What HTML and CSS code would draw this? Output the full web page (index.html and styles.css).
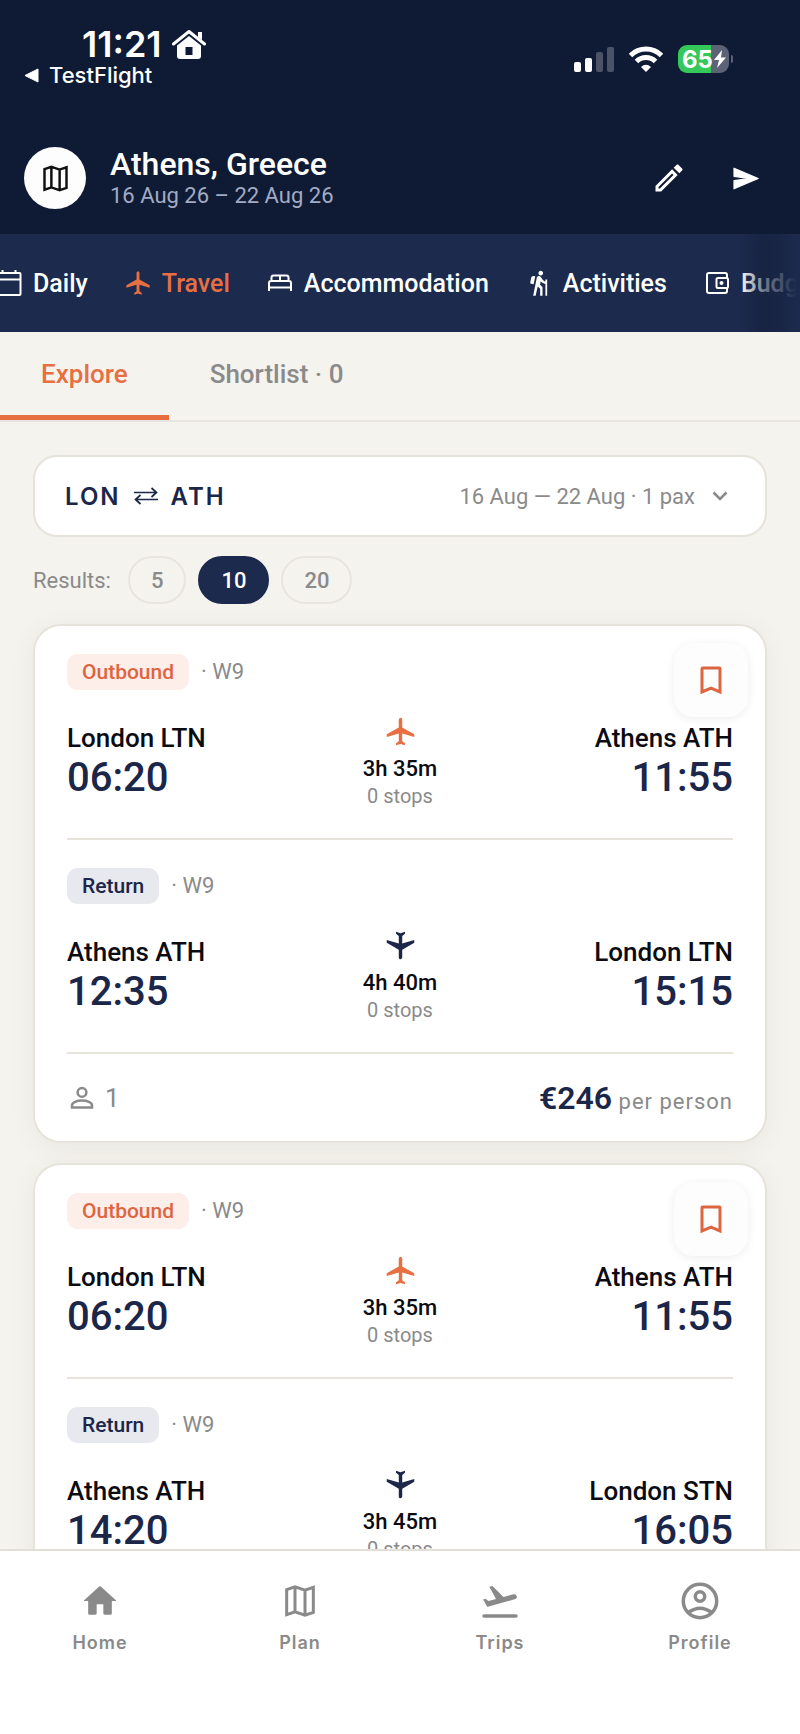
FILE: index.html
```
<!DOCTYPE html>
<html lang="en">
<head>
    <meta charset="UTF-8">
    <meta name="viewport" content="width=device-width, initial-scale=1.0">
    <title>Athens, Greece - Travel</title>
    <link rel="stylesheet" href="styles.css">
</head>
<body>
    <!-- shared icons -->
    <svg class="sprite" aria-hidden="true">
        <symbol id="map" viewBox="0 0 24 24">
            <path d="M4 5.2 9 3.5l6 2 5-1.7v15L15 20.5l-6-2-5 1.7zM9 3.5v15M15 5.5v15" fill="none" stroke="currentColor" stroke-width="1.8"/>
        </symbol>
        <symbol id="plane" viewBox="0 -960 960 960">
            <path d="M350-80v-60l80-60v-220L80-320v-80l350-200v-220q0-21 14.500-35.500T480-880q21 0 35.500 14.500T530-820v220l350 200v80L530-420v220l80 60v60l-130-40-130 40Z" fill="currentColor"/>
        </symbol>
        <symbol id="bookmark" viewBox="0 0 24 24">
            <path d="M6 4.500Q6 4 6.500 4h11Q18 4 18 4.500V20l-6-2.600L6 20z" fill="none" stroke="currentColor" stroke-width="2"/>
        </symbol>
        <symbol id="person" viewBox="0 0 24 24">
            <circle cx="12" cy="7.500" r="3.500"/>
            <path d="M4 19.500v-1.700c0-2.300 4-3.800 8-3.800s8 1.500 8 3.800v1.700z"/>
        </symbol>
    </svg>

    <header>
        <div class="status">
            <div>
                <div class="clock">
                    11:21
                    <svg width="34" height="31" viewBox="0 0 34 31">
                        <path d="M1.500 15 17 2.500 32.500 15" fill="none" stroke="#fff" stroke-width="3" stroke-linecap="round" stroke-linejoin="round"/>
                        <path d="M26 3h4v8l-4-3z" fill="#fff"/>
                        <path fill-rule="evenodd" d="M17 7 29 16.500V27q0 3-3 3H8q-3 0-3-3V16.500zM13.500 18v8h7v-8z" fill="#fff"/>
                    </svg>
                </div>
                <a class="back" href="#">
                    <svg width="15" height="15" viewBox="0 0 15 15"><path d="M1 7.500 14 1v13z" fill="#fff" stroke="#fff" stroke-linejoin="round"/></svg>
                    TestFlight
                </a>
            </div>
            <div class="indicators">
                <svg width="40" height="28" viewBox="0 0 40 28">
                    <g fill="#fff">
                        <rect x="0" y="17" width="7" height="10" rx="2"/>
                        <rect x="11" y="13" width="7" height="14" rx="2"/>
                        <rect x="22" y="7" width="7" height="20" rx="2" opacity=".25"/>
                        <rect x="33" y="2" width="7" height="25" rx="2" opacity=".25"/>
                    </g>
                </svg>
                <svg width="34" height="28" viewBox="0 0 34 28">
                    <g fill="none" stroke="#fff" stroke-width="5">
                        <path d="M1.500 10.500a22 22 0 0 1 31 0"/>
                        <path d="M7.500 16.500a13.500 13.500 0 0 1 19 0"/>
                    </g>
                    <path d="M17 27l-5-5q5-4.500 10 0z" fill="#fff"/>
                </svg>
                <div class="battery">
                    <span>65</span>
                    <svg width="14" height="18" viewBox="0 0 14 18"><path d="M9 0 1 10h5L4 18l9-10.500H8z" fill="#fff"/></svg>
                </div>
            </div>
        </div>

        <div class="trip">
            <div class="trip-icon"><svg width="33" height="33"><use href="#map"/></svg></div>
            <div class="trip-text">
                <h1>Athens, Greece</h1>
                <p>16 Aug 26 – 22 Aug 26</p>
            </div>
            <button class="icon-btn" aria-label="Edit trip">
                <svg width="36" height="36" viewBox="0 0 24 24"><path fill="currentColor" d="M14.060 9.020l.920.920L5.920 19H5v-.920l9.060-9.060M17.660 3c-.250 0-.510.100-.700.290l-1.830 1.830 3.750 3.750 1.830-1.830c.390-.390.390-1.020 0-1.410l-2.340-2.340c-.200-.200-.450-.290-.710-.290zm-3.600 3.190L3 17.250V21h3.750L17.810 9.940l-3.750-3.750z"/></svg>
            </button>
            <button class="icon-btn" aria-label="Share trip">
                <svg width="29" height="29" viewBox="0 0 24 24"><path fill="currentColor" stroke="currentColor" stroke-linejoin="round" d="M2.500 20.500 22.500 12l-20-8.500v6.700l12 1.800-12 1.800z"/></svg>
            </button>
        </div>
    </header>

    <nav class="sections">
        <a href="#">
            <svg width="28" height="28" viewBox="0 0 28 28"><path d="M3.500 4h21q1 0 1 1v20q0 1-1 1h-21q-1 0-1-1V5q0-1 1-1zM2.500 10.500h23M7.500 1v3M20.500 1v3" fill="none" stroke="currentColor" stroke-width="2"/></svg>
            Daily
        </a>
        <a href="#" class="active">
            <svg width="28" height="28"><use href="#plane"/></svg>
            Travel
        </a>
        <a href="#">
            <svg width="28" height="28" viewBox="0 0 28 28"><path d="M3 22v-8q0-2 2-2h18q2 0 2 2v8M3 18.500h22M5.500 12V8.500q0-2 2-2h13q2 0 2 2V12M14 6.500V12" fill="none" stroke="currentColor" stroke-width="2"/></svg>
            Accommodation
        </a>
        <a href="#">
            <svg width="28" height="28" viewBox="0 0 24 24"><path fill="currentColor" d="M13.500 5.500c1.100 0 2-.900 2-2s-.900-2-2-2-2 .900-2 2 .900 2 2 2zM17.500 10.780c-1.230-.370-2.220-1.170-2.800-2.180l-1-1.600c-.410-.650-1.110-1-1.840-1-.780 0-1.590.500-1.780 1.440L7 23h2.100l1.800-8 2.100 2v6h2v-7.500l-2.100-2 .600-3c1 1.150 2.410 2.010 4 2.340V23H19V9h-1.500v1.780zM7.430 13.130l-2.120-.410c-.540-.110-.900-.630-.790-1.170l.760-3.930c.210-1.080 1.260-1.790 2.340-1.580l1.160.230-1.350 6.860z"/></svg>
            Activities
        </a>
        <a href="#">
            <svg width="28" height="28" viewBox="0 0 28 28"><path d="M24 9V6q0-2-2-2H6Q4 4 4 6v16q0 2 2 2h16q2 0 2-2v-3" fill="none" stroke="currentColor" stroke-width="2"/><rect x="13.500" y="9" width="11.500" height="10" rx="1.500" fill="none" stroke="currentColor" stroke-width="2"/><circle cx="18.500" cy="14" r="2" fill="currentColor"/></svg>
            Budget
        </a>
    </nav>

    <div class="tabs">
        <a href="#" class="active">Explore</a>
        <a href="#">Shortlist · 0</a>
    </div>

    <main>
        <button class="search">
            <span class="route">
                LON
                <svg width="24" height="18" viewBox="0 0 24 18"><path d="M0 5.500h22M17.500 1 22.500 5.500l-5 4.500M24 12.500H2M6.500 8 1.500 12.500l5 4.500" fill="none" stroke="currentColor" stroke-width="1.700"/></svg>
                ATH
            </span>
            <span class="when">16 Aug — 22 Aug · 1 pax</span>
            <svg width="16" height="10" viewBox="0 0 16 10"><path d="M1.500 1.500 8 8l6.500-6.500" fill="none" stroke="#8a8a8a" stroke-width="2.500"/></svg>
        </button>

        <div class="results">
            <span>Results:</span>
            <button>5</button>
            <button class="active">10</button>
            <button>20</button>
        </div>

        <article class="card">
            <button class="save" aria-label="Add to shortlist"><svg width="36" height="36"><use href="#bookmark"/></svg></button>
            <section class="leg">
                <div class="leg-head"><span class="badge outbound">Outbound</span><span>· W9</span></div>
                <div class="leg-row">
                    <div class="stop">London LTN<strong>06:20</strong></div>
                    <div class="duration">
                        <svg width="33" height="33"><use href="#plane"/></svg>
                        3h 35m<small>0 stops</small>
                    </div>
                    <div class="stop end">Athens ATH<strong>11:55</strong></div>
                </div>
            </section>
            <section class="leg">
                <div class="leg-head"><span class="badge">Return</span><span>· W9</span></div>
                <div class="leg-row">
                    <div class="stop">Athens ATH<strong>12:35</strong></div>
                    <div class="duration return">
                        <svg width="33" height="33"><use href="#plane"/></svg>
                        4h 40m<small>0 stops</small>
                    </div>
                    <div class="stop end">London LTN<strong>15:15</strong></div>
                </div>
            </section>
            <div class="card-foot">
                <span class="pax"><svg width="30" height="30"><use href="#person"/></svg>1</span>
                <span class="price"><strong>€246</strong> per person</span>
            </div>
        </article>

        <article class="card">
            <button class="save" aria-label="Add to shortlist"><svg width="36" height="36"><use href="#bookmark"/></svg></button>
            <section class="leg">
                <div class="leg-head"><span class="badge outbound">Outbound</span><span>· W9</span></div>
                <div class="leg-row">
                    <div class="stop">London LTN<strong>06:20</strong></div>
                    <div class="duration">
                        <svg width="33" height="33"><use href="#plane"/></svg>
                        3h 35m<small>0 stops</small>
                    </div>
                    <div class="stop end">Athens ATH<strong>11:55</strong></div>
                </div>
            </section>
            <section class="leg">
                <div class="leg-head"><span class="badge">Return</span><span>· W9</span></div>
                <div class="leg-row">
                    <div class="stop">Athens ATH<strong>14:20</strong></div>
                    <div class="duration return">
                        <svg width="33" height="33"><use href="#plane"/></svg>
                        3h 45m<small>0 stops</small>
                    </div>
                    <div class="stop end">London STN<strong>16:05</strong></div>
                </div>
            </section>
        </article>
    </main>

    <nav class="tabbar">
        <a href="#">
            <svg width="40" height="40" viewBox="0 0 24 24"><path fill="currentColor" d="M10 19.500V14h4v5.500q0 .700.700.700h3.700q.700 0 .700-.700V12h2.200q.700 0 .200-.500L12.500 3.300q-.500-.400-1 0L2.500 11.500q-.500.500.200.500h2.200v7.500q0 .700.700.700h3.700q.700 0 .700-.700z"/></svg>
            Home
        </a>
        <a href="#">
            <svg width="44" height="44"><use href="#map"/></svg>
            Plan
        </a>
        <a href="#">
            <svg width="40" height="40" viewBox="0 0 40 40"><path d="M4 35h32" stroke="currentColor" stroke-width="3.500" stroke-linecap="round"/><path fill="currentColor" d="M36.800 15.300c-.500-1.800-2.300-2.300-3.500-2L23.500 16 12.500 5l-3.200.800 6.700 12.300-7.500 2-3-2.400-2.300.700 3.700 6.900q.300.700 1 .500L34.500 18.300c1.700-.500 2.700-1.500 2.300-3z"/></svg>
            Trips
        </a>
        <a href="#">
            <svg width="40" height="40" viewBox="0 0 40 40"><g fill="none" stroke="currentColor" stroke-width="3.500"><circle cx="20" cy="20" r="16.700"/><circle cx="20" cy="15.500" r="4.700"/><path d="M8.500 31.500q11.500-8.500 23 0"/></g></svg>
            Profile
        </a>
    </nav>
</body>
</html>
```

FILE: styles.css
```
* {
    box-sizing: border-box;
}
body {
    margin: 0;
    height: 100vh;
    display: flex;
    flex-direction: column;
    overflow: hidden;
    background: #f5f3ee;
    color: #0b0b12;
    font-family: Roboto, "Liberation Sans", sans-serif;
}
svg {
    display: block;
    flex: none;
}
a {
    color: inherit;
    text-decoration: none;
}
button {
    font: inherit;
    color: inherit;
    background: none;
    border: none;
    padding: 0;
    cursor: pointer;
}
.sprite {
    position: absolute;
    width: 0;
    height: 0;
}

/* header */
header {
    flex: none;
    background: #0f1b35;
    color: #fff;
    padding: 26px 35px 24px 24px;
}
.status {
    display: flex;
    justify-content: space-between;
    align-items: center;
    padding-right: 36px;
    font-family: Inter, sans-serif;
}
.clock {
    display: flex;
    align-items: center;
    gap: 10px;
    padding-left: 58px;
    font-size: 36px;
    line-height: 36px;
    font-weight: 600;
}
.back {
    display: flex;
    align-items: center;
    gap: 10px;
    font-size: 22px;
    line-height: 26px;
    font-weight: 500;
}
.indicators {
    display: flex;
    align-items: center;
    gap: 15px;
    margin-top: 4px;
}
.battery {
    position: relative;
    display: flex;
    align-items: center;
    width: 51px;
    height: 28px;
    padding-left: 4px;
    border-radius: 9px;
    background: linear-gradient(90deg, #34c759 65%, #5c6377 65%);
    font-size: 24px;
    font-weight: 700;
}
.battery::after {
    content: "";
    position: absolute;
    right: -4px;
    top: 10px;
    width: 2px;
    height: 8px;
    border-radius: 0 2px 2px 0;
    background: #5c6377;
}
.trip {
    display: flex;
    align-items: center;
    margin-top: 58px;
    gap: 36px;
}
.trip-icon {
    display: grid;
    place-items: center;
    width: 62px;
    height: 62px;
    margin-right: -12px;
    border-radius: 50%;
    background: #fdfdfd;
    color: #111;
}
.trip-text {
    flex: 1;
}
h1 {
    margin: 0;
    font-size: 32px;
    line-height: 36px;
    font-weight: 500;
}
.trip p {
    margin: 0;
    font-size: 22px;
    line-height: 28px;
    color: #a3abc4;
}
.icon-btn {
    display: grid;
    place-items: center;
    width: 40px;
    height: 40px;
}

/* section nav, scrolled sideways */
.sections {
    position: relative;
    flex: none;
    display: flex;
    align-items: center;
    gap: 36px;
    height: 98px;
    overflow: hidden;
    background: #1c2a4d;
    color: #fff;
    font-size: 25px;
    font-weight: 500;
}
.sections a {
    display: flex;
    align-items: center;
    gap: 10px;
}
.sections a:first-child {
    margin-left: -5px;
}
.sections::after {
    content: "";
    position: absolute;
    top: 0;
    right: 0;
    bottom: 0;
    width: 60px;
    background: linear-gradient(90deg, rgba(20, 31, 58, 0), rgba(20, 31, 58, .6) 40%, rgba(24, 37, 69, .8) 70%, #1c2a4d 94%);
}
.sections .active {
    color: #e76f42;
}

/* explore / shortlist */
.tabs {
    flex: none;
    display: flex;
    height: 90px;
    border-bottom: 2px solid #e8e5de;
    font-size: 26px;
    font-weight: 500;
    color: #8a8a8a;
}
.tabs a {
    padding: 27px 41px 0;
    line-height: 30px;
}
.tabs .active {
    color: #e76f42;
    border-bottom: 5px solid #e76f42;
}

main {
    flex: 1;
    min-height: 0;
    overflow: hidden;
    padding: 33px 33px 0;
}
.search {
    display: flex;
    align-items: center;
    width: 100%;
    height: 82px;
    padding: 0 37px 0 30px;
    border: 2px solid #e6e3da;
    border-radius: 24px;
    background: #fff;
}
.route {
    display: flex;
    align-items: center;
    gap: 13px;
    margin-right: auto;
    font-family: Inter, sans-serif;
    font-size: 24px;
    font-weight: 600;
    letter-spacing: 2px;
    color: #1b2649;
}
.when {
    margin-right: 17px;
    font-size: 22px;
    color: #8a8a8a;
}
.results {
    display: flex;
    align-items: center;
    gap: 12px;
    margin: 19px 0 20px;
    font-size: 22px;
    color: #8a8a8a;
}
.results span {
    margin-right: 5px;
}
.results button {
    height: 48px;
    padding: 0 21px;
    border: 2px solid #e8e5de;
    border-radius: 24px;
    font-weight: 500;
}
.results .active {
    border-color: #1c2a4d;
    background: #1c2a4d;
    color: #fff;
}

/* flight cards */
.card {
    position: relative;
    margin-bottom: 20px;
    padding: 0 32px;
    border: 2px solid #e6e3da;
    border-radius: 28px;
    background: #fff;
    box-shadow: 0 4px 24px rgba(90, 80, 50, .07);
}
.save {
    position: absolute;
    top: 17px;
    right: 17px;
    display: grid;
    place-items: center;
    width: 74px;
    height: 74px;
    border-radius: 20px;
    background: #fdfdfd;
    box-shadow: 0 2px 10px rgba(0, 0, 0, .07);
    color: #dd6540;
}
.leg {
    padding: 28px 0;
    border-bottom: 2px solid #e6e3da;
}
.leg-head {
    display: flex;
    align-items: center;
    gap: 12px;
    margin-bottom: 25px;
    font-size: 22px;
    line-height: 36px;
    color: #8a8a8a;
}
.badge {
    padding: 0 15px;
    border-radius: 11px;
    background: #e8e9ee;
    color: #1b2649;
    font-size: 21px;
    font-weight: 500;
}
.outbound {
    background: #fdeee9;
    color: #dd6540;
}
.leg-row {
    display: grid;
    grid-template-columns: 1fr auto 1fr;
    align-items: center;
    font-weight: 500;
}
.stop {
    font-size: 26px;
    line-height: 30px;
}
.stop strong {
    display: block;
    font-size: 40px;
    line-height: 50px;
    font-weight: 500;
    color: #1b2649;
}
.end {
    text-align: right;
}
.duration {
    text-align: center;
    font-size: 22px;
    line-height: 26px;
}
.duration svg {
    margin: 0 auto 8px;
    color: #e76f42;
}
.duration.return svg {
    color: #1b2649;
    transform: rotate(180deg);
}
.duration small {
    display: block;
    font-size: 20px;
    line-height: 28px;
    font-weight: 400;
    color: #8a8a8a;
}
.card-foot {
    display: flex;
    justify-content: space-between;
    align-items: center;
    height: 87px;
    color: #8a8a8a;
}
.pax {
    display: flex;
    align-items: center;
    gap: 8px;
    font-size: 26px;
}
.pax svg {
    fill: none;
    stroke: currentColor;
    stroke-width: 2;
}
.price {
    font-size: 22px;
    letter-spacing: 1px;
}
.price strong {
    font-size: 32px;
    font-weight: 600;
    letter-spacing: 0;
    color: #1b2649;
}

/* bottom tab bar */
.tabbar {
    flex: none;
    display: grid;
    grid-template-columns: repeat(4, 1fr);
    height: 185px;
    padding-top: 30px;
    border-top: 2px solid #e2dfd6;
    background: #fff;
    color: #8a8a8a;
    font-family: Inter, sans-serif;
    font-size: 18px;
    line-height: 24px;
    font-weight: 600;
    letter-spacing: 1px;
}
.tabbar a {
    display: flex;
    flex-direction: column;
    align-items: center;
}
.tabbar svg {
    height: 40px;
    margin-bottom: 10px;
}
```
